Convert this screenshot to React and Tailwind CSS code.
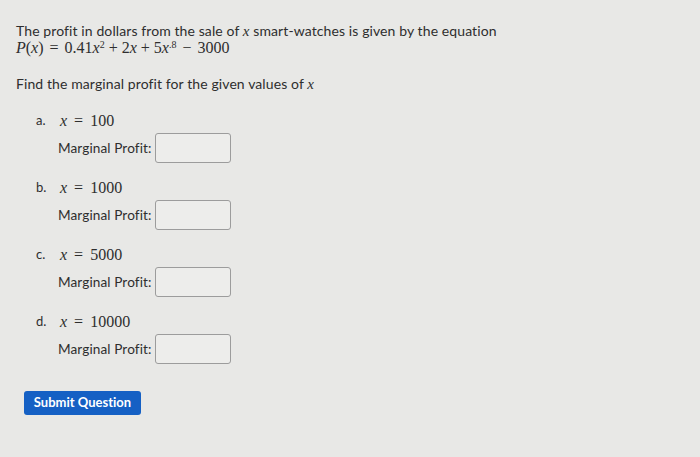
import React from 'react';

const sans = {
  fontFamily: 'Lato, "Open Sans", sans-serif',
  fontVariantLigatures: 'none',
};

const X = () => <i className="font-['Liberation_Serif',serif] text-[15px]">x</i>;

const Part = ({ letter, value }) => (
  <div className="mb-[15px]">
    <div className="flex h-[20px] items-center">
      <span className="w-[24px] text-[13px]">{letter}.</span>
      <span className="font-['Liberation_Serif',serif] text-[16px]">
        <i>x</i> <span className="mx-[3px]">=</span> {value}
      </span>
    </div>
    <div className="mt-[2px] flex h-[30px] items-center pl-[22px]">
      <span className="w-[97px] text-[13.6px] tracking-[0.1px]">Marginal Profit:</span>
      <div className="h-[30px] w-[76px] rounded-[3px] border border-[#9c9c9c] bg-[#ededeb]" />
    </div>
  </div>
);

export default function App() {
  return (
    <div
      className="h-[457px] w-[700px] bg-[#e8e8e6] pl-[16px] pt-[22px] text-[#2e2e2e]"
      style={sans}
    >
      <p className="text-[14px] leading-[17px] tracking-[0.1px]">
        The profit in dollars from the sale of <X /> smart-watches is given by the equation
      </p>
      <p className="-mt-[1px] font-['Liberation_Serif',serif] text-[16px] leading-[17px]">
        <i>P</i>(<i>x</i>) <span className="mx-[2px]">=</span> 0.41<i>x</i>
        <sup className="text-[10px]">2</sup> + 2<i>x</i> + 5<i>x</i>
        <sup className="text-[10px]">.8</sup> <span className="mx-[2px]">−</span> 3000
      </p>
      <p className="mt-[19px] text-[14px] leading-[17px] tracking-[0.1px]">
        Find the marginal profit for the given values of <X />
      </p>
      <div className="mt-[18px] pl-[20px]">
        <Part letter="a" value="100" />
        <Part letter="b" value="1000" />
        <Part letter="c" value="5000" />
        <Part letter="d" value="10000" />
      </div>
      <button className="ml-[8px] mt-[12px] h-[24px] w-[117px] rounded-[3px] bg-[#1560c4] text-[13px] font-bold text-white">
        Submit Question
      </button>
    </div>
  );
}
